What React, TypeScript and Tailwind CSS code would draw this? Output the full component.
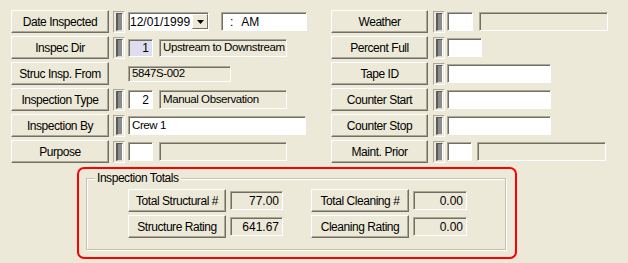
import React from "react";

const btnCls =
  "flex items-center justify-center shrink-0 bg-[#ece9d8] border border-t-white border-l-white border-r-[#716f64] border-b-[#716f64] shadow-[inset_-1px_-1px_0_#aca899] text-[12px] tracking-[-0.45px] text-black leading-none whitespace-nowrap";

const sunken =
  "flex items-center shrink-0 border border-t-[#aca899] border-l-[#aca899] border-b-white border-r-white shadow-[inset_1px_1px_0_#716f64] text-black overflow-hidden whitespace-nowrap";

function Btn({ label, w }: { label: string; w: string }) {
  return <div className={`${btnCls} ${w} h-[23px]`}>{label}</div>;
}

function Ind({ ml }: { ml: string }) {
  return (
    <div
      className={`${ml} w-[12px] h-[22px] shrink-0 flex items-center justify-center border border-t-[#aca899] border-l-[#aca899] border-b-white border-r-white`}
    >
      <div className="w-[7px] h-[18px] bg-[#8c8c8c] border-l-2 border-t border-l-[#5a5a5a] border-t-[#5a5a5a] border-r border-b border-r-white border-b-[#d8d8d8]" />
    </div>
  );
}

function Field({
  cls,
  text,
  bg = "bg-white",
  align = "left",
  color = "text-black",
}: {
  cls: string;
  text?: string;
  bg?: string;
  align?: "left" | "right";
  color?: string;
}) {
  return (
    <div
      className={`${sunken} ${cls} ${bg} ${color} ${
        align === "right" ? "justify-end pr-[3px]" : "pl-[3px]"
      }`}
    >
      {text}
    </div>
  );
}

const row = "flex items-center h-[23px]";
const gray = "bg-[#ece9d8]";
const ft = "text-[11.5px] tracking-[-0.4px]";

export default function App() {
  return (
    <div className="w-[628px] h-[263px] bg-[#ece9d8] overflow-hidden pt-[10px] font-['Liberation_Sans',Arial,sans-serif] text-black">
      <div className="flex pl-[11px]">
        {/* Left column */}
        <div className="w-[320px] flex flex-col gap-[3px]">
          <div className={row}>
            <Btn label="Date Inspected" w="w-[98px]" />
            <Ind ml="ml-[4px]" />
            <div className={`${sunken} ml-[3px] w-[81px] h-[19px] bg-white justify-between`}>
              <span className="pl-[1px] text-[12px]">12/01/1999</span>
              <div className="w-[16px] h-[15px] flex items-center justify-center bg-[#ece9d8] border border-t-white border-l-white border-r-[#716f64] border-b-[#716f64]">
                <svg width="7" height="4" viewBox="0 0 7 4">
                  <polygon points="0,0 7,0 3.5,4" fill="#000" />
                </svg>
              </div>
            </div>
            <div className={`${sunken} ml-[12px] w-[86px] h-[19px] bg-white text-[12px]`}>
              <span className="ml-[8px]">:</span>
              <span className="ml-[8px]">AM</span>
            </div>
          </div>
          <div className={row}>
            <Btn label="Inspec Dir" w="w-[98px]" />
            <Ind ml="ml-[4px]" />
            <Field cls={`ml-[3px] w-[25px] h-[18px] text-[12px]`} bg="bg-[#dedef0]" text="1" align="right" color="text-[#0000ff]" />
            <Field cls={`ml-[6px] w-[128px] h-[18px] ${ft}`} bg={gray} text="Upstream to Downstream" />
          </div>
          <div className={row}>
            <Btn label="Struc Insp. From" w="w-[98px]" />
            <Field cls={`ml-[19px] w-[103px] h-[16px] pl-[2px] ${ft}`} bg={gray} text="5847S-002" />
          </div>
          <div className={row}>
            <Btn label="Inspection Type" w="w-[98px]" />
            <Ind ml="ml-[4px]" />
            <Field cls="ml-[3px] w-[25px] h-[19px] text-[12px]" text="2" align="right" />
            <Field cls={`ml-[6px] w-[128px] h-[19px] ${ft}`} bg={gray} text="Manual Observation" />
          </div>
          <div className={row}>
            <Btn label="Inspection By" w="w-[98px]" />
            <Ind ml="ml-[4px]" />
            <Field cls={`ml-[3px] w-[178px] h-[19px] ${ft}`} text="Crew 1" />
          </div>
          <div className={row}>
            <Btn label="Purpose" w="w-[98px]" />
            <Ind ml="ml-[4px]" />
            <Field cls="ml-[3px] w-[25px] h-[19px]" />
            <Field cls="ml-[6px] w-[128px] h-[19px]" bg={gray} />
          </div>
        </div>

        {/* Right column */}
        <div className="flex flex-col gap-[3px]">
          <div className={row}>
            <Btn label="Weather" w="w-[97px]" />
            <Ind ml="ml-[5px]" />
            <Field cls="ml-[2px] w-[26px] h-[19px]" />
            <Field cls="ml-[6px] w-[129px] h-[19px]" bg={gray} />
          </div>
          <div className={row}>
            <Btn label="Percent Full" w="w-[97px]" />
            <Ind ml="ml-[5px]" />
            <Field cls="ml-[2px] w-[35px] h-[19px]" />
          </div>
          <div className={row}>
            <Btn label="Tape ID" w="w-[97px]" />
            <Ind ml="ml-[5px]" />
            <Field cls="ml-[2px] w-[104px] h-[19px]" />
          </div>
          <div className={row}>
            <Btn label="Counter Start" w="w-[97px]" />
            <Ind ml="ml-[5px]" />
            <Field cls="ml-[2px] w-[104px] h-[19px]" />
          </div>
          <div className={row}>
            <Btn label="Counter Stop" w="w-[97px]" />
            <Ind ml="ml-[5px]" />
            <Field cls="ml-[2px] w-[104px] h-[19px]" />
          </div>
          <div className={row}>
            <Btn label="Maint. Prior" w="w-[97px]" />
            <Ind ml="ml-[5px]" />
            <Field cls="ml-[2px] w-[25px] h-[19px]" />
            <Field cls="ml-[5px] w-[129px] h-[19px]" bg={gray} />
          </div>
        </div>
      </div>

      {/* Inspection Totals (annotated in red) */}
      <div className="ml-[77px] mt-[4px] w-[440px] h-[92px] border-2 border-[#ff0000] rounded-[7px]">
        <div className="relative ml-[7px] mt-[9px] w-[420px] h-[72px] border border-[#c5c2b2] shadow-[inset_1px_1px_0_#ffffff,1px_1px_0_#ffffff]">
          <span className="absolute left-[8px] top-[-8px] px-[2px] bg-[#ece9d8] text-[12px] tracking-[-0.45px] leading-[14px]">
            Inspection Totals
          </span>
          <div className="pl-[41px] pt-[10px] flex flex-col gap-[3px]">
            <div className={row}>
              <Btn label="Total Structural #" w="w-[98px]" />
              <Field cls="ml-[4px] w-[53px] h-[19px] text-[12px]" bg={gray} text="77.00" align="right" />
              <div className="ml-[28px]">
                <Btn label="Total Cleaning #" w="w-[98px]" />
              </div>
              <Field cls="ml-[4px] w-[54px] h-[19px] text-[12px]" bg={gray} text="0.00" align="right" />
            </div>
            <div className={row}>
              <Btn label="Structure Rating" w="w-[98px]" />
              <Field cls="ml-[4px] w-[53px] h-[19px] text-[12px]" bg={gray} text="641.67" align="right" />
              <div className="ml-[28px]">
                <Btn label="Cleaning Rating" w="w-[98px]" />
              </div>
              <Field cls="ml-[4px] w-[54px] h-[19px] text-[12px]" bg={gray} text="0.00" align="right" />
            </div>
          </div>
        </div>
      </div>
    </div>
  );
}
